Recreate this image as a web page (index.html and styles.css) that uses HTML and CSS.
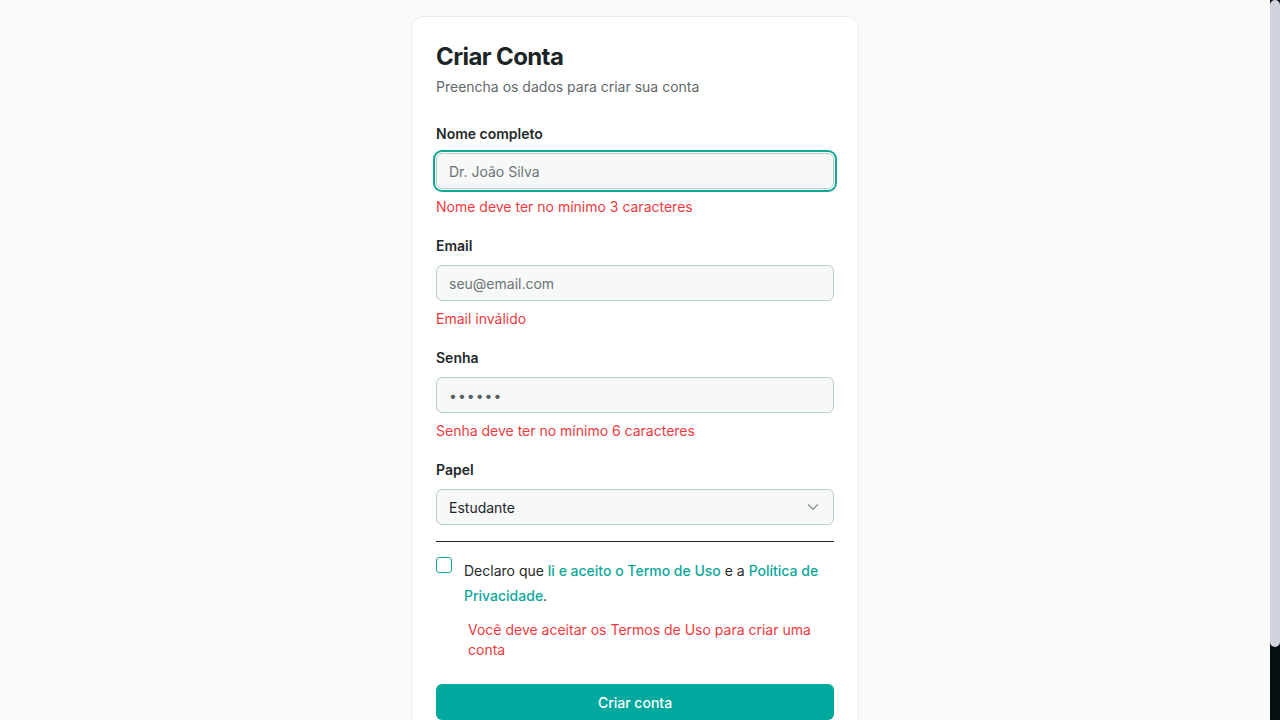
FILE: index.html
```html
<!DOCTYPE html>
<html lang="pt-BR">
<head>
<meta charset="utf-8">
<title>Criar Conta</title>
<link rel="stylesheet" href="styles.css">
</head>
<body>
<main class="page">
  <section class="card">
    <header class="card-header">
      <h1 class="title">Criar Conta</h1>
      <p class="subtitle">Preencha os dados para criar sua conta</p>
    </header>
    <form class="form">
      <div class="field">
        <label class="label" for="nome">Nome completo</label>
        <input class="input input-focus" id="nome" type="text" placeholder="Dr. João Silva">
        <p class="error">Nome deve ter no mínimo 3 caracteres</p>
      </div>
      <div class="field">
        <label class="label" for="email">Email</label>
        <input class="input" id="email" type="email" placeholder="seu@email.com">
        <p class="error">Email inválido</p>
      </div>
      <div class="field">
        <label class="label" for="senha">Senha</label>
        <input class="input input-pass" id="senha" type="text" placeholder="••••••">
        <p class="error">Senha deve ter no mínimo 6 caracteres</p>
      </div>
      <div class="field field-last">
        <label class="label" for="papel">Papel</label>
        <div class="select">
          <span class="select-value">Estudante</span>
          <svg class="chevron" width="12" height="8" viewBox="0 0 12 8" aria-hidden="true"><path d="M1.5 1.8 6 6.2l4.5-4.4" fill="none" stroke="#8a9294" stroke-width="1.3" stroke-linecap="round" stroke-linejoin="round"/></svg>
        </div>
      </div>
      <hr class="divider">
      <div class="terms">
        <span class="checkbox"></span>
        <p class="terms-text">Declaro que <a class="link" href="#">li e aceito o Termo de Uso</a> e a <a class="link" href="#">Política de Privacidade</a>.</p>
      </div>
      <p class="error error-terms">Você deve aceitar os Termos de Uso para criar uma conta</p>
      <button class="button" type="button">Criar conta</button>
      <p class="footer">Já tem uma conta? <a class="link" href="#">Entrar</a></p>
    </form>
  </section>
</main>
<div class="scrollbar" aria-hidden="true"><div class="scrollbar-thumb"></div></div>
</body>
</html>
```

FILE: styles.css
```css
body {
  margin: 0;
  display: flex;
  align-items: flex-start;
  font-family: Inter, "Noto Sans", sans-serif;
  color: #1c2628;
  background: #fafafa;
}
.scrollbar {
  flex: none;
  width: 10px;
  height: 720px;
  background: #061012;
  position: sticky;
  top: 0;
}
.scrollbar-thumb {
  height: 647px;
  background: #d0d4dc;
  border-radius: 5px;
}
.page {
  flex: 1;
  display: flex;
  justify-content: center;
  padding: 16px 0 16px;
}
.card {
  width: 448px;
  box-sizing: border-box;
  background: #fff;
  border: 1px solid #ececec;
  border-radius: 12px;
  padding: 24px 24px 24px;
}
.title {
  margin: 0;
  font-size: 24px;
  line-height: 32px;
  font-weight: 700;
  color: #1b2426;
  letter-spacing: -0.6px;
}
.subtitle {
  margin: 4px 0 0;
  font-size: 14px;
  line-height: 20px;
  color: #5f6a6c;
}
.form {
  margin-top: 27px;
}
.field {
  display: flex;
  flex-direction: column;
  margin-bottom: 19px;
}
.field-last {
  margin-bottom: 16px;
}
.label {
  font-size: 14px;
  line-height: 20px;
  font-weight: 600;
  color: #1f292b;
  margin-bottom: 9px;
}
.input {
  box-sizing: border-box;
  height: 36px;
  width: 100%;
  padding: 0 12px;
  border: 1px solid #b8cfca;
  border-radius: 6px;
  background: #f7f8f8;
  font-family: inherit;
  font-size: 14px;
  color: #1c2628;
  outline: none;
}
.input::placeholder {
  color: #6b7577;
}
.input-pass::placeholder {
  color: #55605f;
  letter-spacing: 1px;
}
.input-focus {
  box-shadow: 0 0 0 1px #ffffff, 0 0 0 3px #0ea99b;
}
.error {
  margin: 8px 0 0;
  font-size: 14px;
  line-height: 20px;
  color: #f03a3e;
}
.select {
  box-sizing: border-box;
  height: 36px;
  display: flex;
  align-items: center;
  justify-content: space-between;
  padding: 0 14px 0 12px;
  border: 1px solid #b8cfca;
  border-radius: 6px;
  background: #f7f8f8;
  font-size: 14px;
  color: #1c2628;
}
.divider {
  margin: 0;
  border: 0;
  border-top: 1px solid #1f2628;
}
.terms {
  display: flex;
  align-items: flex-start;
  gap: 12px;
  margin-top: 16px;
}
.checkbox {
  flex: none;
  width: 16px;
  height: 16px;
  box-sizing: border-box;
  border: 1.5px solid #14a89b;
  border-radius: 3px;
  margin-top: -1px;
}
.terms-text {
  margin: 0;
  font-size: 14px;
  line-height: 25px;
  color: #1f292b;
}
.link {
  color: #0da79a;
  text-decoration: none;
  font-weight: 500;
}
.error-terms {
  margin: 12px 0 0 32px;
}
.button {
  display: block;
  width: 100%;
  height: 36px;
  margin-top: 24px;
  border: 0;
  border-radius: 6px;
  background: #00a99d;
  color: #fff;
  font-family: inherit;
  font-size: 14px;
  font-weight: 500;
}
.footer {
  margin: 16px 0 0;
  text-align: center;
  font-size: 14px;
  line-height: 20px;
  color: #5f6a6c;
}
```
